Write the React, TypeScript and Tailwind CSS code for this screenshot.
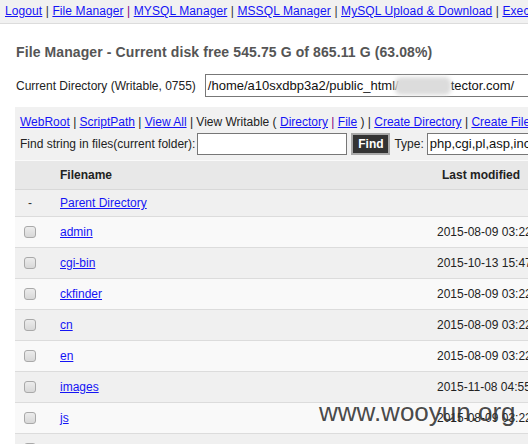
import React from "react";

const navLinks = [
  { label: "Logout", sep: "text-[#333]" },
  { label: "File Manager", sep: "text-[#800080]" },
  { label: "MYSQL Manager", sep: "text-[#333]" },
  { label: "MSSQL Manager", sep: "text-[#333]" },
  { label: "MySQL Upload & Download", sep: "text-[#333]" },
  { label: "Execute Command", sep: "text-[#333]" },
  { label: "PHP Variable", sep: "text-[#333]" },
];

const files = [
  { name: "admin", date: "2015-08-09 03:22:41" },
  { name: "cgi-bin", date: "2015-10-13 15:47:02" },
  { name: "ckfinder", date: "2015-08-09 03:22:41" },
  { name: "cn", date: "2015-08-09 03:22:42" },
  { name: "en", date: "2015-08-09 03:22:42" },
  { name: "images", date: "2015-11-08 04:55:10" },
  { name: "js", date: "2015-08-09 03:22:43" },
  { name: "m", date: "2015-08-09 03:22:43" },
];

function A({ children }: { children: React.ReactNode }) {
  return <a className="text-[#1414f5] underline cursor-pointer">{children}</a>;
}

function Checkbox() {
  return (
    <span className="block w-[12px] h-[12px] rounded-[3px] border border-[#a9a9a9] bg-gradient-to-b from-[#ececec] to-[#d8d8d8]" />
  );
}

export default function App() {
  return (
    <div className="relative w-[528px] h-[444px] overflow-hidden bg-white text-[12px] leading-[14px] text-[#222] font-['Liberation_Sans',Arial,sans-serif]">
      <div className="w-[760px]">
        {/* top nav */}
        <div className="h-[24px] bg-[#f1f1f1] border-b border-[#dcdcdc] pl-[5px] pt-[4px] text-[12px] tracking-[0.1px] whitespace-nowrap">
          {navLinks.map((l, i) => (
            <span key={l.label}>
              <A>{l.label}</A>
              {i < navLinks.length - 1 && <span className={l.sep}> | </span>}
            </span>
          ))}
        </div>

        <div className="pl-[16px] pt-[20px]">
          <h2 className="font-bold text-[#555] text-[14px] leading-[16px] tracking-[0.1px] whitespace-nowrap">
            File Manager - Current disk free 545.75 G of 865.11 G (63.08%)
          </h2>
          <div className="flex items-center mt-[14px] whitespace-nowrap">
            <span className="text-[#222]">Current Directory (Writable, 0755)</span>
            <div className="relative ml-[9px] w-[330px] h-[23px] border border-[#777] bg-white pl-[2px] flex items-center text-[13px]">
              <span className="text-[#111]">/home/a10sxdbp3a2/public_html/</span>
              <span className="inline-block w-[56px] h-[18px] rounded-[6px] bg-[#dcdcdc] blur-[2px] mx-[-4px]" />
              <span className="text-[#111] ml-[4px]">tector.com/</span>
            </div>
          </div>
        </div>

        {/* panel */}
        <div className="ml-[15px] mt-[10px] bg-[#f1f1f1] pt-[6px] whitespace-nowrap">
          <div className="pl-[5px] h-[18px] flex items-center">
            <span>
              <A>WebRoot</A> | <A>ScriptPath</A> | <A>View All</A> | View Writable ({" "}
              <A>Directory</A> <span className="text-[#800080]">|</span> <A>File</A> ) |{" "}
              <A>Create Directory</A> | <A>Create File</A> | <A>Upload</A>
            </span>
          </div>
          <div className="flex items-center pl-[5px] h-[22px] mt-[2px]">
            <span>Find string in files(current folder):</span>
            <span className="ml-[2px] w-[150px] h-[22px] border border-[#777] bg-white" />
            <span className="ml-[4px] h-[22px] w-[39px] flex items-center justify-center bg-[#333] border-2 border-[#a8a8a8] text-white font-bold">
              Find
            </span>
            <span className="ml-[4px] text-[#222]">Type:</span>
            <span className="ml-[3px] w-[200px] h-[22px] border border-[#777] bg-white pl-[2px] flex items-center text-[13px] text-[#111]">
              php,cgi,pl,asp,inc,js,html,htm,jsp
            </span>
          </div>
          <div className="h-[6px] border-b border-[#fafafa]" />

          {/* table */}
          <div className="bg-[#e8e8e8] h-[29px] flex items-center font-bold text-[#222] border-b border-[#d8d8d8]">
            <span className="w-[45px]" />
            <span className="w-[382px]">Filename</span>
            <span>Last modified</span>
          </div>
          <div className="bg-[#f0f0f0] h-[27px] flex items-center border-b border-[#dcdcdc]">
            <span className="w-[45px] pl-[13px] text-[#333]">-</span>
            <A>Parent Directory</A>
          </div>
          {files.map((f, i) => (
            <div
              key={f.name}
              className={`h-[31px] flex items-center border-b border-[#dcdcdc] ${
                i % 2 === 0 ? "bg-[#f9f9f9]" : "bg-[#f0f0f0]"
              }`}
            >
              <span className="w-[45px] pl-[9px]">
                <Checkbox />
              </span>
              <span className="w-[377px]">
                <A>{f.name}</A>
              </span>
              <span className="text-[#222]">{f.date}</span>
            </div>
          ))}
        </div>
      </div>

      {/* watermark */}
      <div className="absolute left-[319px] top-[397px] text-[26px] leading-[30px] text-[#333]/90 font-['Liberation_Sans',Arial,sans-serif] pointer-events-none">
        www.wooyun.org
      </div>
    </div>
  );
}
